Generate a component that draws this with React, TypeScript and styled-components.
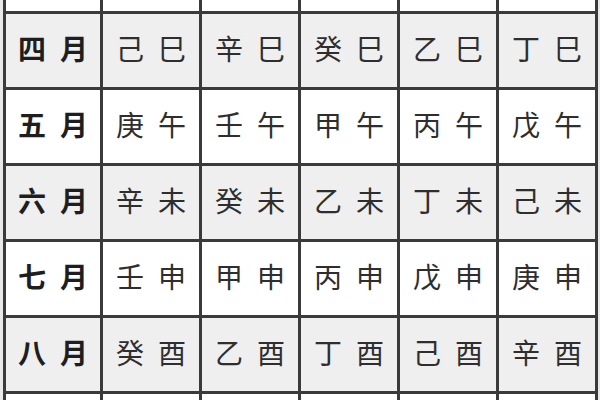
import React from 'react'
import styled, { createGlobalStyle } from 'styled-components'

interface IRow {
  month: string
  pillars: string[]
  isCut?: boolean
}

// first and last rows only show their lower / upper edge, so they stay empty
const ROWS: IRow[] = [
  { month: '三月', pillars: ['戊辰', '庚辰', '壬辰', '甲辰', '丙辰'], isCut: true },
  { month: '四月', pillars: ['己巳', '辛巳', '癸巳', '乙巳', '丁巳'] },
  { month: '五月', pillars: ['庚午', '壬午', '甲午', '丙午', '戊午'] },
  { month: '六月', pillars: ['辛未', '癸未', '乙未', '丁未', '己未'] },
  { month: '七月', pillars: ['壬申', '甲申', '丙申', '戊申', '庚申'] },
  { month: '八月', pillars: ['癸酉', '乙酉', '丁酉', '己酉', '辛酉'] },
  { month: '九月', pillars: ['甲戌', '丙戌', '戊戌', '庚戌', '壬戌'], isCut: true },
]

function Pair({ text, isHead }: { text: string; isHead?: boolean }) {
  return (
    <Chars $isHead={isHead}>
      {Array.from(text).map((ch, i) => (
        <span key={i}>{ch}</span>
      ))}
    </Chars>
  )
}

function App() {
  return (
    <>
      <GlobalStyle />
      <Page>
        <Table>
          {ROWS.map((row, index) => {
            const isShaded = index % 2 === 1
            return (
              <React.Fragment key={row.month}>
                <Cell $isShaded={isShaded}>
                  {!row.isCut && <Pair text={row.month} isHead />}
                </Cell>
                {row.pillars.map((p) => (
                  <Cell key={p} $isShaded={isShaded}>
                    {!row.isCut && <Pair text={p} />}
                  </Cell>
                ))}
              </React.Fragment>
            )
          })}
        </Table>
      </Page>
    </>
  )
}

export default App

const GlobalStyle = createGlobalStyle`
  html, body {
    margin: 0;
    padding: 0;
    background: #e9e9e9;
  }
`

const Page = styled.div`
  height: 400px;
  overflow: hidden;
  width: 600px;
`

const Table = styled.div`
  background: #3a3a3a;
  border: 3px solid #3a3a3a;
  display: grid;
  gap: 3px;
  grid-auto-rows: 73px;
  grid-template-columns: 94px repeat(5, 96px);
  margin-left: 3px;
  margin-top: -65px;
  width: fit-content;
`

const Cell = styled.div<{ $isShaded?: boolean }>`
  align-items: center;
  background: ${({ $isShaded }) => ($isShaded ? '#efefef' : '#ffffff')};
  box-sizing: border-box;
  display: flex;
  justify-content: center;
  padding-bottom: 6px;
`

const Chars = styled.div<{ $isHead?: boolean }>`
  color: ${({ $isHead }) => ($isHead ? '#1e1e1e' : '#2e2e2e')};
  display: flex;
  font-family: 'Noto Sans CJK SC', 'Noto Sans CJK TC', sans-serif;
  font-size: 28px;
  font-weight: ${({ $isHead }) => ($isHead ? 700 : 400)};
  gap: 14px;
  line-height: 1;
`
